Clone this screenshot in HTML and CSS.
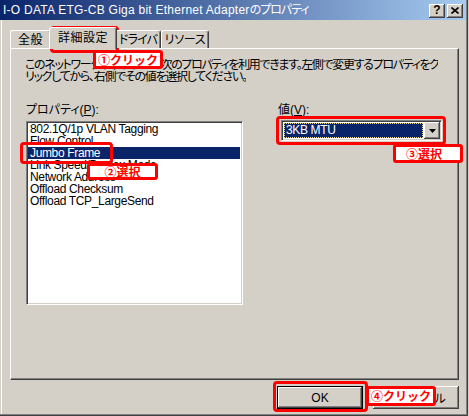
FILE: index.html
```html
<!DOCTYPE html>
<html lang="ja">
<head>
<meta charset="utf-8">
<title>プロパティ</title>
<link rel="stylesheet" href="styles.css">
</head>
<body>
<div class="window">
  <div class="titlebar">
    <span class="title"><span class="title-en">I-O DATA ETG-CB Giga bit Ethernet Adapter</span><span class="title-ja">のプロパティ</span></span>
    <span class="cap-btn help">?</span>
    <span class="cap-btn close"><svg width="8" height="7" viewBox="0 0 8 7"><path d="M0.5 0.5 L7.5 6.5 M7.5 0.5 L0.5 6.5" stroke="#000" stroke-width="1.6" fill="none"/></svg></span>
  </div>
  <div class="tabs">
    <div class="tab tab-general">全般</div>
    <div class="tab tab-adv active">詳細設定</div>
    <div class="tab tab-drv">ドライバ</div>
    <div class="tab tab-res">リソース</div>
  </div>
  <div class="panel">
    <p class="desc"><span class="line l1">このネットワーク アダプタでは次のプロパティを利用できます。左側で変更するプロパティをク</span><span class="line l2">リックしてから、右側でその値を選択してください。</span></p>
    <div class="cols">
      <div class="col-left">
        <div class="label">プロパティ(<u>P</u>):</div>
        <ul class="listbox">
          <li>802.1Q/1p VLAN Tagging</li>
          <li>Flow Control</li>
          <li class="sel">Jumbo Frame</li>
          <li>Link Speed/Duplex Mode</li>
          <li>Network Address</li>
          <li>Offload Checksum</li>
          <li>Offload TCP_LargeSend</li>
        </ul>
      </div>
      <div class="col-right">
        <div class="label">値(<u>V</u>):</div>
        <div class="combo">
          <div class="combo-val">3KB MTU</div>
          <div class="combo-btn"><svg width="7" height="4" viewBox="0 0 7 4"><path d="M0 0 H7 L3.5 4 Z" fill="#000"/></svg></div>
        </div>
      </div>
    </div>
  </div>
  <div class="buttons">
    <button class="btn default">OK</button>
    <button class="btn">キャンセル</button>
  </div>

  <div class="mark mark-tab"></div>
  <div class="note note-1">①クリック</div>
  <div class="mark mark-item"></div>
  <div class="note note-2">②選択</div>
  <div class="mark mark-combo"></div>
  <div class="note note-3">③選択</div>
  <div class="mark mark-ok"></div>
  <div class="note note-4">④クリック</div>
</div>
</body>
</html>
```

FILE: styles.css
```css
html, body {
  margin: 0;
  padding: 0;
  background: #D4D0C8;
}

body {
  font-family: "Liberation Sans", "Noto Sans CJK JP", sans-serif;
  font-size: 12px;
  color: #000;
}

.window {
  position: relative;
  width: 468px;
  height: 416px;
  box-sizing: border-box;
  background: #D4D0C8;
  box-shadow: inset -1px -1px #404040, inset -2px -2px #808080, inset 1px 1px #D4D0C8, inset 2px 2px #fff;
  overflow: hidden;
}

/* title bar */
.titlebar {
  height: 20px;
  margin-right: 2px;
  display: flex;
  align-items: center;
  padding: 0 3px 0 3px;
  background: linear-gradient(to right, #0A246A, #A6CAF0);
  box-sizing: border-box;
}

.title {
  flex: 1;
  color: #fff;
  font-size: 12px;
  line-height: 14px;
  white-space: nowrap;
}

.title-en {
  letter-spacing: 0.25px;
}

.title-ja {
  letter-spacing: -1px;
  font-feature-settings: "palt";
}

.cap-btn {
  width: 16px;
  height: 14px;
  box-sizing: border-box;
  background: #D4D0C8;
  box-shadow: inset -1px -1px #404040, inset 1px 1px #fff, inset -2px -2px #808080;
  display: flex;
  align-items: center;
  justify-content: center;
  margin-top: 1px;
}

.help {
  font-weight: bold;
  font-size: 12px;
  line-height: 12px;
  margin-right: 2px;
  padding-bottom: 1px;
}

/* tabs */
.tabs {
  display: flex;
  align-items: flex-end;
  height: 21px;
  margin: 7px 0 0 10px;
  position: relative;
  z-index: 1;
}

.tab {
  height: 18px;
  box-sizing: border-box;
  border-top: 1px solid #fff;
  border-left: 1px solid #fff;
  border-right: 1px solid #404040;
  border-radius: 3px 3px 0 0;
  box-shadow: inset -1px 0 #808080;
  background: #D4D0C8;
  display: flex;
  justify-content: center;
  align-items: center;
  font-size: 12px;
  line-height: 12px;
  padding-top: 1px;
  font-feature-settings: "palt";
  white-space: nowrap;
}

.tab-general { width: 41px; letter-spacing: 0.5px; }
.tab-adv { width: 68px; letter-spacing: 0.5px; }
.tab-drv { width: 46px; letter-spacing: -0.8px; }
.tab-res { width: 48px; letter-spacing: -0.3px; }

.tab.active {
  height: 22px;
  margin: 0 -2px -1px -2px;
  position: relative;
  z-index: 2;
  padding-top: 0;
  padding-bottom: 2px;
}

/* panel */
.panel {
  width: 449px;
  height: 332px;
  margin-left: 10px;
  box-sizing: border-box;
  border-top: 1px solid #fff;
  border-left: 1px solid #fff;
  border-right: 1px solid #404040;
  border-bottom: 1px solid #404040;
  box-shadow: inset -1px -1px #808080;
  padding: 10px 0 0 14px;
}

.desc {
  margin: 0;
  font-size: 12px;
  line-height: 12px;
  white-space: nowrap;
}

.desc .line {
  display: block;
  height: 12px;
  overflow: hidden;
  text-align: justify;
  text-align-last: justify;
  letter-spacing: -2px;
  font-feature-settings: "palt";
}

.desc .l1 { width: 413px; }
.desc .l2 { width: 221px; }

.cols {
  display: flex;
  margin-top: 21px;
  padding-left: 1px;
}

.label {
  font-size: 12px;
  line-height: 12px;
  height: 12px;
  font-feature-settings: "palt";
}

.col-left {
  width: 217px;
}

.listbox {
  list-style: none;
  margin: 5px 0 0 0;
  padding: 0 2px 0 0;
  height: 184px;
  box-sizing: border-box;
  background: #fff;
  border: 1px solid;
  border-color: #808080 #fff #fff #808080;
  box-shadow: inset 1px 1px #404040, inset -1px -1px #D4D0C8;
  padding-left: 1px;
  padding-top: 1px;
}

.listbox li {
  height: 12px;
  line-height: 12px;
  padding-left: 2px;
  letter-spacing: -0.35px;
  white-space: nowrap;
}

.listbox li.sel {
  background: #0A246A;
  color: #fff;
}

.col-right {
  margin-left: 35px;
}

.combo {
  margin: 4px 0 0 3px;
  width: 161px;
  height: 21px;
  box-sizing: border-box;
  background: #fff;
  border: 1px solid;
  border-color: #808080 #fff #fff #808080;
  box-shadow: inset 1px 1px #404040, inset -1px -1px #D4D0C8;
  padding: 1px;
  display: flex;
}

.combo-val {
  flex: 1;
  margin: 1px;
  background: #0A246A;
  color: #fff;
  border: 1px dotted #E8D890;
  box-sizing: border-box;
  padding-left: 1px;
  line-height: 12px;
  letter-spacing: -0.35px;
}

.combo-btn {
  width: 16px;
  box-sizing: border-box;
  background: #D4D0C8;
  box-shadow: inset -1px -1px #404040, inset 1px 1px #fff, inset -2px -2px #808080;
  display: flex;
  align-items: center;
  justify-content: center;
}

/* bottom buttons */
.buttons {
  display: flex;
  justify-content: flex-end;
  gap: 10px;
  margin: 6px 9px 0 0;
}

.btn {
  width: 86px;
  height: 23px;
  box-sizing: border-box;
  border: none;
  margin: 0;
  padding: 0;
  background: #D4D0C8;
  box-shadow: inset -1px -1px #404040, inset 1px 1px #fff, inset -2px -2px #808080;
  font-family: "Liberation Sans", "Noto Sans CJK JP", sans-serif;
  font-size: 12px;
  color: #000;
}

.btn.default {
  border: 1px solid #000;
}

/* annotations */
.mark {
  position: absolute;
  box-sizing: border-box;
  border: 3px solid #FF0000;
  border-radius: 4px;
}

.note {
  position: absolute;
  box-sizing: border-box;
  border: 3px solid #FF0000;
  border-radius: 3px;
  background: #fff;
  color: #FF0000;
  font-family: "Noto Sans CJK JP", sans-serif;
  font-weight: bold;
  font-size: 12px;
  line-height: 12px;
  display: flex;
  align-items: center;
  justify-content: center;
  white-space: nowrap;
}

.mark-tab { left: 50px; top: 26px; width: 69px; height: 27px; }
.note-1 { left: 93px; top: 50px; width: 70px; height: 19px; }
.mark-item { left: 20px; top: 142px; width: 93px; height: 22px; }
.note-2 { left: 87px; top: 163px; width: 71px; height: 17px; }
.mark-combo { left: 276px; top: 116px; width: 170px; height: 29px; }
.note-3 { left: 393px; top: 144px; width: 70px; height: 19px; padding-right: 8px; }
.mark-ok { left: 273px; top: 381px; width: 95px; height: 31px; }
.note-4 { left: 366px; top: 386px; width: 70px; height: 20px; }
```
